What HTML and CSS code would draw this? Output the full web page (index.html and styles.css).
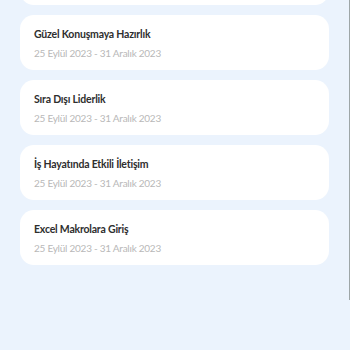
FILE: index.html
```html
<!DOCTYPE html>
<html lang="tr">
<head>
<meta charset="utf-8">
<link rel="stylesheet" href="styles.css">
</head>
<body>
<div class="page">
  <ul class="list">
    <li class="card"></li>
    <li class="card"><div class="title">Güzel Konuşmaya Hazırlık</div><div class="date">25 Eylül 2023 - 31 Aralık 2023</div></li>
    <li class="card"><div class="title">Sıra Dışı Liderlik</div><div class="date">25 Eylül 2023 - 31 Aralık 2023</div></li>
    <li class="card"><div class="title">İş Hayatında Etkili İletişim</div><div class="date">25 Eylül 2023 - 31 Aralık 2023</div></li>
    <li class="card"><div class="title">Excel Makrolara Giriş</div><div class="date">25 Eylül 2023 - 31 Aralık 2023</div></li>
  </ul>
</div>
</body>
</html>
```
FILE: styles.css
```css
html, body {
  margin: 0;
  padding: 0;
  height: 100%;
  overflow: hidden;
}
body {
  background: #ebf3fd;
  font-family: "Lato", "Noto Sans", sans-serif;
}
.page {
  height: 350px;
  border-right: 1px solid #9ea6a8;
  box-sizing: border-box;
}
.list {
  list-style: none;
  margin: -50px 0 0 0;
  padding: 0 20px;
  display: flex;
  flex-direction: column;
  gap: 10px;
}
.card {
  background: #ffffff;
  border-radius: 14px;
  height: 55px;
  box-sizing: border-box;
  padding: 12px 14px 0;
  display: flex;
  flex-direction: column;
  gap: 5px;
}
.title {
  font-size: 10.5px;
  line-height: 14px;
  font-weight: 700;
  letter-spacing: -0.2px;
  color: #2e2e2e;
}
.date {
  font-size: 10px;
  line-height: 14px;
  letter-spacing: -0.25px;
  color: #b8b8b8;
}
```
